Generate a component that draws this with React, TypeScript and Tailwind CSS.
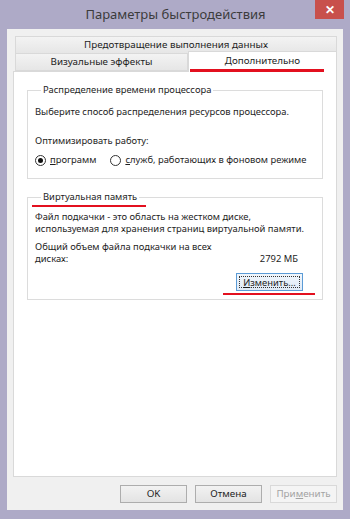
import { ReactNode } from "react";

const Radio = ({ checked, label, hot }: { checked?: boolean; label: string; hot: string }) => (
  <label className="flex items-center gap-[4px] whitespace-nowrap">
    <span className="w-[11px] h-[11px] rounded-full border border-[#333] bg-white flex items-center justify-center">
      {checked && <span className="w-[5px] h-[5px] rounded-full bg-[#111]" />}
    </span>
    <span>
      <span className="underline">{hot}</span>
      {label}
    </span>
  </label>
);

const Group = ({ title, children, mark }: { title: string; children: ReactNode; mark?: boolean }) => (
  <fieldset className="border border-[#dcdcdc] px-[7px]">
    <legend className="relative ml-[6px] px-[2px] leading-[14px]">
      {title}
      {mark && <span className="absolute left-[-9px] top-[15px] w-[114px] h-[2px] bg-[#e3101f]" />}
    </legend>
    {children}
  </fieldset>
);

const DlgButton = ({ children, disabled }: { children: ReactNode; disabled?: boolean }) => (
  <button
    className={
      disabled
        ? "w-[67px] h-[18px] border border-[#d9d9d9] bg-[#f4f4f4] text-[#a3a3a3] leading-[16px]"
        : "w-[67px] h-[18px] border border-[#adadad] bg-gradient-to-b from-[#f2f2f2] to-[#e3e3e3] text-[#1e1e1e] leading-[16px]"
    }
  >
    {children}
  </button>
);

export default function App() {
  return (
    <div className="w-[350px] h-[519px] bg-[#aeaac7] flex flex-col font-['Noto_Sans',sans-serif] text-[9.4px] text-[#1e1e1e] overflow-hidden whitespace-nowrap">
      {/* title bar */}
      <div className="h-[29px] flex items-center justify-center relative">
        <span className="text-[13px] text-[#3c3c3c] pl-[1px]">Параметры быстродействия</span>
        <div className="absolute right-[6px] top-0 w-[29px] h-[19px] bg-[#c8504c] flex items-center justify-center text-white text-[12px] font-bold leading-none">
          ✕
        </div>
      </div>

      {/* client area */}
      <div className="flex-1 mx-[7px] mb-[9px] bg-[#f0f0f0] flex flex-col pt-[7px] pb-[7px] px-[6px]">
        <div className="ml-[2px] h-[17px] border border-[#d9d9d9] border-b-0 bg-gradient-to-b from-[#f3f3f3] to-[#e6e6e6] flex items-center justify-center leading-none text-[9.8px]">
          Предотвращение выполнения данных
        </div>
        <div className="ml-[2px] h-[18px] flex items-start text-[9.8px]">
          <div className="w-[173px] h-[18px] border border-[#d9d9d9] bg-gradient-to-b from-[#f3f3f3] to-[#e6e6e6] flex items-center justify-center leading-none">
            Визуальные эффекты
          </div>
          <div className="flex-1 h-[21px] -mt-[2px] -mb-[1px] relative z-10 bg-white border border-[#d9d9d9] border-b-0 flex flex-col">
            <div className="flex-1 flex items-center justify-center leading-none">Дополнительно</div>
            <div className="h-[3px] ml-[1px] mr-[12px] bg-[#e3101f]" />
          </div>
        </div>

        <div className="flex-1 bg-white border border-[#d9d9d9] px-[13px] pt-[11px]">
          <Group title="Распределение времени процессора">
            <div className="pt-[9px] pb-[11px] leading-[12px]">
              <div>Выберите способ распределения ресурсов процессора.</div>
              <div className="mt-[17px]">Оптимизировать работу:</div>
              <div className="mt-[6px] h-[14px] flex items-center gap-[14px]">
                <Radio checked hot="п" label="рограмм" />
                <Radio hot="с" label="лужб, работающих в фоновом режиме" />
              </div>
            </div>
          </Group>

          <div className="mt-[11px]">
            <Group title="Виртуальная память" mark>
              <div className="pt-[7px] pb-[4px] leading-[12px]">
                <div>
                  Файл подкачки - это область на жестком диске,
                  <br />
                  используемая для хранения страниц виртуальной памяти.
                </div>
                <div className="mt-[6px]">Общий объем файла подкачки на всех</div>
                <div className="flex justify-between pr-[17px]">
                  <span>дисках:</span>
                  <span>2792 МБ</span>
                </div>
                <div className="mt-[8px] flex justify-end pr-[12px]">
                  <button className="w-[67px] h-[18px] border border-[#5b9bd6] bg-gradient-to-b from-[#f0f6fc] to-[#dfeaf6] p-[2px]">
                    <span className="block h-full border border-dotted border-[#333] leading-[11px]">
                      <span className="underline">И</span>зменить...
                    </span>
                  </button>
                </div>
                <div className="mt-[2px] flex justify-end">
                  <div className="w-[92px] h-[2px] bg-[#e3101f]" />
                </div>
              </div>
            </Group>
          </div>
        </div>

        <div className="mt-[8px] flex justify-end gap-[8px] text-[9.8px]">
          <DlgButton>OK</DlgButton>
          <DlgButton>Отмена</DlgButton>
          <DlgButton disabled>
            При<span className="underline">м</span>енить
          </DlgButton>
        </div>
      </div>
    </div>
  );
}
